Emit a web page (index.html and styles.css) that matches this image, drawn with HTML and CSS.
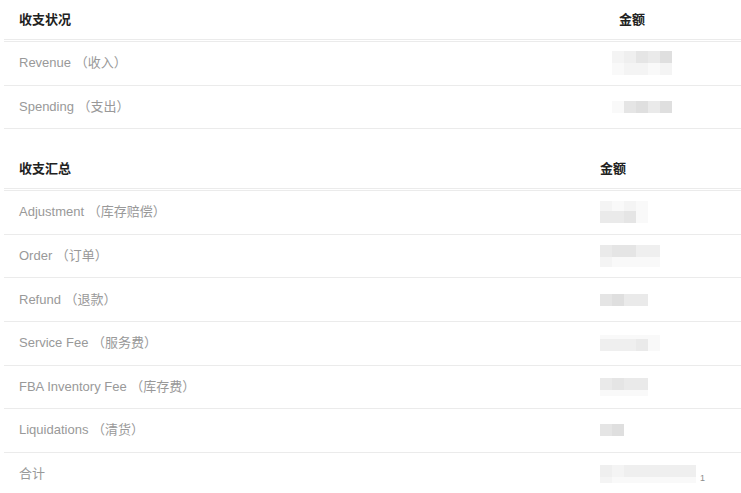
FILE: index.html
```html
<!DOCTYPE html>
<html lang="zh-CN">

<head>
  <meta charset="UTF-8">
  <meta name="viewport" content="width=device-width, initial-scale=1.0">
  <title>收支</title>
  <link rel="stylesheet" href="styles.css">
</head>

<body>
  <div class="wrapper">

    <div class="table status">
      <div class="thead">
        <div class="cell">收支状况</div>
        <div class="cell amount-head">金额</div>
      </div>
      <div class="row">
        <div class="cell">Revenue （收入）</div>
        <div class="cell">
          <div class="mosaic">
            <div class="mrow"><i class="s1"></i><i class="s2"></i><i class="s4"></i><i class="s3"></i><i class="s5"></i></div>
            <div class="mrow"><i class="s0"></i><i class="s1"></i><i class="s1"></i><i class="s0"></i><i class="s1"></i></div>
          </div>
        </div>
      </div>
      <div class="row">
        <div class="cell">Spending （支出）</div>
        <div class="cell">
          <div class="mosaic">
            <div class="mrow"><i class="s0"></i><i class="s4"></i><i class="s5"></i><i class="s3"></i><i class="s5"></i></div>
          </div>
        </div>
      </div>
    </div>

    <div class="table summary">
      <div class="thead">
        <div class="cell">收支汇总</div>
        <div class="cell">金额</div>
      </div>
      <div class="row">
        <div class="cell">Adjustment （库存赔偿）</div>
        <div class="cell">
          <div class="mosaic">
            <div class="mrow part"><i class="s1"></i><i class="s0"></i><i class="s1"></i><i class="s0"></i></div>
            <div class="mrow"><i class="s3"></i><i class="s3"></i><i class="s4"></i><i class="s0"></i></div>
          </div>
        </div>
      </div>
      <div class="row">
        <div class="cell">Order （订单）</div>
        <div class="cell">
          <div class="mosaic">
            <div class="mrow"><i class="s3"></i><i class="s4"></i><i class="s4"></i><i class="s2"></i><i class="s2"></i></div>
            <div class="mrow part"><i class="s1"></i><i class="s0"></i><i class="s0"></i><i class="s0"></i><i class="s0"></i></div>
          </div>
        </div>
      </div>
      <div class="row">
        <div class="cell">Refund （退款）</div>
        <div class="cell">
          <div class="mosaic">
            <div class="mrow"><i class="s4"></i><i class="s5"></i><i class="s3"></i><i class="s3"></i></div>
          </div>
        </div>
      </div>
      <div class="row">
        <div class="cell">Service Fee （服务费）</div>
        <div class="cell">
          <div class="mosaic">
            <div class="mrow thin"><i class="s0"></i><i class="s0"></i><i class="s0"></i><i class="s0"></i><i class="s0"></i></div>
            <div class="mrow"><i class="s2"></i><i class="s2"></i><i class="s2"></i><i class="s3"></i><i class="s0"></i></div>
          </div>
        </div>
      </div>
      <div class="row">
        <div class="cell">FBA Inventory Fee （库存费）</div>
        <div class="cell">
          <div class="mosaic">
            <div class="mrow"><i class="s3"></i><i class="s4"></i><i class="s3"></i><i class="s3"></i></div>
            <div class="mrow half"><i class="s0"></i><i class="s0"></i><i class="s0"></i><i class="s0"></i></div>
          </div>
        </div>
      </div>
      <div class="row">
        <div class="cell">Liquidations （清货）</div>
        <div class="cell">
          <div class="mosaic">
            <div class="mrow"><i class="s4"></i><i class="s5"></i></div>
          </div>
        </div>
      </div>
      <div class="row last">
        <div class="cell">合计</div>
        <div class="cell total">
          <div class="mosaic">
            <div class="mrow"><i class="s2"></i><i class="s1"></i><i class="s2"></i><i class="s2"></i><i class="s2"></i><i class="s2"></i><i class="s2"></i><i class="s2"></i></div>
            <div class="mrow half"><i class="s1"></i><i class="s0"></i><i class="s0"></i><i class="s0"></i><i class="s0"></i><i class="s0"></i><i class="s0"></i><i class="s0"></i></div>
          </div>
          <span class="tail">1</span>
        </div>
      </div>
    </div>

  </div>
</body>

</html>
```

FILE: styles.css
```css
body {
  background: #fff;
  margin: 0;
  padding: 0;
  font-family: "Liberation Sans", Arial, "Noto Sans CJK SC", sans-serif;
  font-size: 13px;
  color: #999;
}

.wrapper {
  padding-left: 4px;
}

.table + .table {
  margin-top: 20px;
}

.thead,
.row {
  display: grid;
  align-items: center;
}

.status .thead,
.status .row {
  grid-template-columns: 593px 1fr;
}

.summary .thead,
.summary .row {
  grid-template-columns: 581px 1fr;
}

.thead {
  height: 39px;
  border-bottom: 3px double #ebebeb;
  color: #222;
  font-weight: bold;
}

.thead .cell,
.row .cell:first-child {
  padding-bottom: 3px;
}

.row {
  height: 42.6px;
  border-bottom: 1px solid #ebebeb;
}

.row.last {
  border-bottom: 0;
}

.cell {
  padding: 0 15px;
}

.amount-head {
  padding-left: 22px;
}

.total {
  display: flex;
  align-items: flex-end;
}

.tail {
  font-size: 9px;
  line-height: 9px;
  color: #8c8c8c;
  margin-left: 4px;
}

.mosaic {
  display: flex;
  flex-direction: column;
}

.mrow {
  display: flex;
  height: 12px;
}

.mrow.part {
  height: 10px;
}

.mrow.half {
  height: 6px;
}

.mrow.thin {
  height: 4px;
}

.mrow i {
  width: 12px;
  height: 100%;
}

.s0 { background: #f9f9f9; }
.s1 { background: #f4f4f4; }
.s2 { background: #efefef; }
.s3 { background: #eaeaea; }
.s4 { background: #e5e5e5; }
.s5 { background: #dfdfdf; }
```
